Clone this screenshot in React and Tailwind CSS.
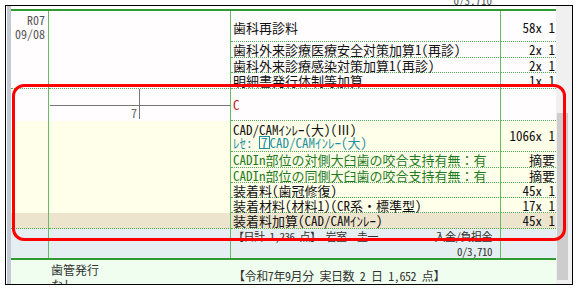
import React from 'react';

// line styles shared by the cells
const vLine = 'border-r border-r-[#66bb66]';
const dotB = 'border-b border-b-[#55aa55] [border-bottom-style:dotted]';

const Item = ({ h, children, num, tone = 'text-[#111]', extra = '' }) => (
  <div className={`flex ${h}`}>
    <div className={`w-[270px] shrink-0 ${vLine} ${dotB} pl-[2px] flex items-center whitespace-nowrap leading-[13px] ${tone} ${extra}`}>
      {children}
    </div>
    <div className={`w-[55px] shrink-0 ${dotB} flex items-center justify-end pr-[1px] leading-[13px] text-[#111] ${extra}`}>
      {num}
    </div>
  </div>
);

const Row = ({ h, bg, last, left, children, num, tone, extra }) => (
  <div className={`flex ${h} ${bg}`}>
    <div className={`w-[38px] shrink-0 ${vLine} ${last ? dotB : ''}`} />
    <div className={`w-[182px] shrink-0 ${vLine} ${last ? dotB : ''}`}>{left}</div>
    <div className="flex flex-col">
      <Item h={h} num={num} tone={tone} extra={extra}>
        {children}
      </Item>
    </div>
  </div>
);

const ToothChart = () => (
  <div className="flex flex-col h-full pl-[1px]">
    <div className="flex h-[17px] border-b border-b-[#777]">
      <div className="w-[90px] border-r border-r-[#777]" />
    </div>
    <div className="flex h-[13px]">
      <div className="w-[90px] border-r border-r-[#777] flex items-center justify-end pr-[2px] text-[12px] leading-[13px] text-[#666]">
        7
      </div>
    </div>
  </div>
);

export default function App() {
  return (
    <div className="relative w-[580px] h-[291px] bg-white overflow-hidden font-['Noto_Sans_Mono_CJK_JP','Noto_Sans_CJK_JP',monospace] text-[13px]">
      {/* tail of the previous day's row, scrolled out above */}
      <div className="h-[5px] overflow-hidden flex justify-end items-end pr-[88px] text-[11px]">
        <span className="leading-[13px] mb-[-2px] text-[#555]">0/3,710</span>
      </div>

      <div className="ml-[5px] w-[568px] h-[280px] border border-black flex">
        <div className="w-[1px] bg-white" />
        <div className="w-[4px] bg-[#c3cad6]" />

        <div className="w-[545px] flex flex-col">
          <div className="h-[3px] bg-white" />
          <div className="h-[2px] bg-[#339933]" />

          {/* 09/08 visit */}
          <div className="flex bg-[#fffdfd]">
            <div className={`w-[38px] shrink-0 ${vLine} ${dotB} flex flex-col items-end pr-[3px] pt-[2px] text-[12px] leading-[13.5px] text-[#555]`}>
              <span>R07</span>
              <span>09/08</span>
            </div>
            <div className={`w-[182px] shrink-0 ${vLine} ${dotB}`} />
            <div className="flex flex-col">
              <Item h="h-[31px]" num="58x 1" extra="pt-[3px]">歯科再診料</Item>
              <Item h="h-[16px]" num="2x 1">歯科外来診療医療安全対策加算1(再診)</Item>
              <Item h="h-[15px]" num="2x 1">歯科外来診療感染対策加算1(再診)</Item>
              <Item h="h-[16px]" num="1x 1">明細書発行体制等加算</Item>
            </div>
          </div>

          {/* tooth 7 */}
          <Row h="h-[32px]" bg="bg-[#fffdfd]" left={<ToothChart />} tone="text-[#c42020]">
            C
          </Row>
          <div className="flex h-[31px] bg-[#ffffea]">
            <div className={`w-[38px] shrink-0 ${vLine}`} />
            <div className={`w-[182px] shrink-0 ${vLine}`} />
            <div className={`w-[270px] shrink-0 ${vLine} ${dotB} pl-[2px] flex flex-col justify-center leading-[13px] whitespace-nowrap`}>
              <span className="text-[#111]">CAD/CAMｲﾝﾚｰ(大)(Ⅲ)</span>
              <span className="text-[#1f8fa0] flex items-center h-[13px]">
                ﾚｾ:&nbsp;
                <span className="border border-[#1f8fa0] px-[1px] leading-[11px]">7</span>
                CAD/CAMｲﾝﾚｰ(大)
              </span>
            </div>
            <div className={`w-[55px] shrink-0 ${dotB} flex items-center justify-end pr-[1px] text-[#111]`}>1066x 1</div>
          </div>
          <Row h="h-[16px]" bg="bg-[#ffffea]" tone="text-[#1e7b1e]" num="摘要">
            CADIn部位の対側大臼歯の咬合支持有無：有
          </Row>
          <Row h="h-[15px]" bg="bg-[#ffffea]" tone="text-[#1e7b1e]" num="摘要">
            CADIn部位の同側大臼歯の咬合支持有無：有
          </Row>
          <Row h="h-[15px]" bg="bg-[#ffffea]" num="45x 1">装着料(歯冠修復)</Row>
          <Row h="h-[15px]" bg="bg-[#ffffea]" num="17x 1">装着材料(材料1)(CR系・標準型)</Row>
          <Row h="h-[16px]" bg="bg-[#ece4cc]" last num="45x 1">装着料加算(CAD/CAMｲﾝﾚｰ)</Row>

          {/* day total */}
          <div className="flex h-[29px] bg-[#e5eff1] text-[#333]">
            <div className={`w-[38px] shrink-0 ${vLine}`} />
            <div className={`w-[182px] shrink-0 ${vLine}`} />
            <div className={`w-[270px] shrink-0 ${vLine} pl-[2px] pr-[8px] flex flex-col text-[11px] tracking-[-0.5px] leading-[15px] whitespace-nowrap`}>
              <div className="flex justify-between">
                <span>【日計 1,236 点】 岩室　圭一</span>
                <span>入金/負担金</span>
              </div>
              <div className="text-right">0/3,710</div>
            </div>
            <div className="w-[55px] shrink-0" />
          </div>
          <div className="h-[2px] bg-[#339933]" />

          {/* month summary */}
          <div className="flex h-[24px] bg-[#effeee] text-[#333] overflow-hidden">
            <div className="w-[38px] shrink-0" />
            <div className="w-[182px] shrink-0 pl-[2px] pt-[2px] text-[12px] leading-[15px] flex flex-col">
              <span>歯管発行</span>
              <span>なし</span>
            </div>
            <div className="pl-[2px] pt-[8px] text-[12px] tracking-[-0.4px] leading-[15px] whitespace-nowrap">
              【令和7年9月分 実日数 2 日 1,652 点】
            </div>
          </div>
        </div>

        {/* scrollbar */}
        <div className="w-[16px] bg-[#f0f0f0] flex flex-col">
          <div className="h-[107px] shrink-0" />
          <div className="w-[11px] h-[167px] ml-[1px] bg-[#cdcdcd]" />
        </div>
      </div>

      {/* highlight */}
      <div className="absolute left-[12px] top-[84px] w-[554px] h-[157px] border-[3px] border-[#ff0000] rounded-[12px] pointer-events-none" />
    </div>
  );
}
